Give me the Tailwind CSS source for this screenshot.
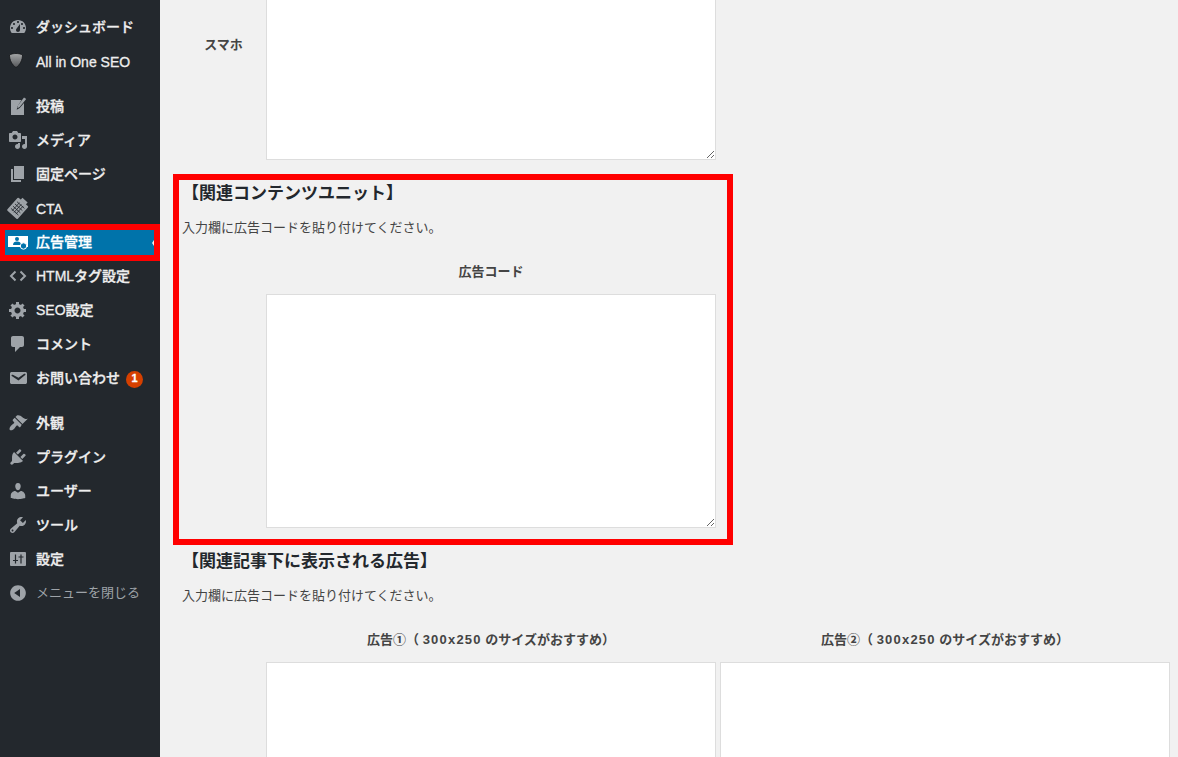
<!DOCTYPE html>
<html lang="ja">
<head>
    <meta charset="UTF-8">
    <title>広告管理</title>
    <script src="https://cdn.jsdelivr.net/npm/@tailwindcss/browser@4"></script>
</head>
<body class="h-screen overflow-hidden flex bg-[#f1f1f1] font-['Liberation_Sans','Noto_Sans_CJK_JP',sans-serif] text-[13px] text-[#444]">
    <!-- sidebar -->
    <nav class="w-40 shrink-0 h-full bg-[#23282d] pt-2.5 text-sm font-medium text-[#eee] [-webkit-text-stroke:0.3px]">
        <a class="flex items-center h-[34px]"><svg class="w-5 h-5 ml-2 mr-2 fill-[#9ea3a8]" viewBox="0 0 20 20"><path d="M3.76 16h12.48c1.1-1.37 1.76-3.11 1.76-5 0-4.42-3.58-8-8-8s-8 3.58-8 8c0 1.89.66 3.63 1.76 5zM10 4c.55 0 1 .45 1 1s-.45 1-1 1-1-.45-1-1 .45-1 1-1zM6 6c.55 0 1 .45 1 1s-.45 1-1 1-1-.45-1-1 .45-1 1-1zm8 0c.55 0 1 .45 1 1s-.45 1-1 1-1-.45-1-1 .45-1 1-1zm-5.37 5.55L12 7v6c0 1.1-.9 2-2.01 2C8.89 15 8 14.1 8 13c0-.57.24-1.08.63-1.45zM4 10c.55 0 1 .45 1 1s-.45 1-1 1-1-.45-1-1 .45-1 1-1zm12 0c.55 0 1 .45 1 1s-.45 1-1 1-1-.45-1-1 .45-1 1-1z"/></svg>ダッシュボード</a>
        <a class="flex items-center h-[34px]"><svg class="w-5 h-5 ml-2 mr-2 -mt-1" viewBox="0 0 20 20"><defs><linearGradient id="shield" x1="0" y1="0" x2="0" y2="1"><stop offset="0" stop-color="#a4a6a7"/><stop offset="1" stop-color="#55575a"/></linearGradient></defs><path fill="url(#shield)" stroke="#111416" stroke-width=".8" d="M8 4.500c2.500 0 5 .5 6.500 1.500 0 5-2.500 10-6.500 12.500C4 16 1.500 11 1.500 6 3 5 5.500 4.500 8 4.500z"/></svg><span class="translate-y-px">All in One SEO</span></a>
        <div class="h-[11px]"></div>
        <a class="flex items-center h-[34px]"><svg class="w-5 h-5 ml-2 mr-2 fill-[#9ea3a8]" viewBox="0 0 20 20"><path d="M3 4h10.500l-4 6.500-.8 3.300 3-1.800 4.300-5V19H3z"/><path d="M16 1.500l2.200 1.500-6.500 8-2.300 1.300.3-2.600z"/></svg>投稿</a>
        <a class="flex items-center h-[34px]"><svg class="w-5 h-5 ml-2 mr-2 fill-[#9ea3a8]" viewBox="0 0 20 20"><path d="M13 11V4c0-.55-.45-1-1-1h-1.670L9 1H5L3.670 3H2c-.55 0-1 .45-1 1v7c0 .55.45 1 1 1h10c.55 0 1-.45 1-1zM7 4.500c1.380 0 2.500 1.120 2.500 2.500S8.380 9.500 7 9.500 4.500 8.380 4.500 7 5.620 4.500 7 4.500zM14 6h5v10.500c0 1.380-1.120 2.500-2.500 2.500S14 17.880 14 16.500s1.120-2.500 2.500-2.500c.17 0 .34.02.5.05V9h-3V6zm-4 8.050V13h2v3.500c0 1.380-1.120 2.500-2.500 2.500S7 17.880 7 16.500 8.120 14 9.500 14c.17 0 .34.02.5.05z"/></svg>メディア</a>
        <a class="flex items-center h-[34px]"><svg class="w-5 h-5 ml-2 mr-2 fill-[#9ea3a8]" viewBox="0 0 20 20"><path d="M6 15V2h10v13H6zm-1 1h8v2H3V5h2v11z"/></svg>固定ページ</a>
        <a class="flex items-center h-[34px]"><svg class="w-5 h-5 ml-2 mr-2 overflow-visible" viewBox="0 0 20 20"><g transform="rotate(42 10 10)"><rect x="3" y="2" width="14" height="17" rx="1" fill="#9ea3a8"/><rect x="6.500" y="-.5" width="7" height="3" fill="#9ea3a8"/><path d="M5 6h10M5 9h10M5 12h10M5 15h10M7.500 5v11M10 5v11M12.500 5v11" stroke="#23282d" stroke-width=".8" fill="none"/></g></svg><span class="translate-y-px">CTA</span></a>
        <!-- current item, red frame from the annotation -->
        <a class="flex items-center h-[37px] -mt-px -mb-0.5 border-[6px] border-l-[5px] border-[#f00] bg-[#0073aa] text-white relative"><svg class="w-5 h-[18px] ml-[3px] mr-2 shrink-0" viewBox="0 0 20 18"><rect y="2" width="20" height="11" fill="#fff"/><circle cx="9" cy="5" r="2" fill="#0073aa"/><path d="M5 11c0-2.500 1.500-3.500 4-3.500s4 1 4 3.500z" fill="#0073aa"/><circle cx="15.500" cy="12" r="3.200" fill="#0073aa" stroke="#fff" stroke-width="1"/></svg><span class="-translate-y-px">広告管理</span><span class="absolute right-0 top-1/2 -translate-y-1/2 w-0 h-0 border-y-[3px] border-y-transparent border-r-[2px] border-r-[#f1f1f1]"></span></a>
        <a class="flex items-center h-[34px]"><svg class="w-5 h-5 ml-2 mr-2 fill-none stroke-[#9ea3a8] stroke-2" viewBox="0 0 20 20"><path d="M7.500 5.500L3 10l4.500 4.500M12.500 5.500L17 10l-4.500 4.500"/></svg>HTMLタグ設定</a>
        <a class="flex items-center h-[34px]"><svg class="w-5 h-5 ml-2 mr-2 fill-[#9ea3a8]" viewBox="0 0 20 20"><path d="M18 12h-2.180c-.17.7-.44 1.350-.81 1.930l1.540 1.540-2.100 2.100-1.540-1.540c-.58.36-1.230.63-1.910.79V19H8v-2.180c-.68-.16-1.330-.43-1.910-.79l-1.540 1.540-2.120-2.120 1.540-1.540c-.36-.58-.63-1.230-.79-1.910H1V9.030h2.170c.16-.7.44-1.350.8-1.940L2.430 5.550l2.100-2.100 1.540 1.540c.58-.37 1.240-.64 1.930-.81V2h3v2.180c.68.16 1.330.43 1.910.79l1.540-1.540 2.120 2.120-1.540 1.540c.36.59.64 1.240.8 1.940H18V12zm-8.500 1.500c1.660 0 3-1.340 3-3s-1.340-3-3-3-3 1.340-3 3 1.340 3 3 3z"/></svg>SEO設定</a>
        <a class="flex items-center h-[34px]"><svg class="w-5 h-5 ml-2 mr-2 fill-[#9ea3a8]" viewBox="0 0 20 20"><path d="M5 2h9c1.100 0 2 .9 2 2v7c0 1.100-.9 2-2 2h-2l-5 5v-5H5c-1.100 0-2-.9-2-2V4c0-1.100.9-2 2-2z"/></svg>コメント</a>
        <a class="flex items-center h-[34px]"><svg class="w-5 h-5 ml-2 mr-2 fill-[#9ea3a8]" viewBox="0 0 20 20"><path d="M3.870 4h13.250C18.370 4 19 4.590 19 5.790v8.420c0 1.190-.63 1.790-1.880 1.790H3.870c-1.250 0-1.880-.6-1.880-1.790V5.790c0-1.200.63-1.790 1.880-1.790zm6.620 8.600l6.740-5.530c.24-.2.430-.66.13-1.070-.29-.41-.82-.42-1.170-.17l-5.700 3.860L4.800 6.830c-.35-.25-.88-.24-1.170.17-.3.41-.11.87.13 1.070z"/></svg>お問い合わせ<span class="ml-[6px] w-[17px] h-[17px] rounded-full bg-[#d54000] text-white text-[11px] font-bold flex items-center justify-center translate-y-px">1</span></a>
        <div class="h-[11px]"></div>
        <a class="flex items-center h-[34px]"><svg class="w-5 h-5 ml-2 mr-2 fill-[#9ea3a8]" viewBox="0 0 20 20"><path d="M14.480 11.060L7.410 3.990l1.500-1.500c.5-.56 2.300-.47 3.510.32 1.210.8 1.430 1.280 2.910 2.100 1.180.64 2.450 1.260 4.450.85zm-.71.71L6.700 4.700 4.930 6.470c-.39.39-.39 1.020 0 1.410l1.060 1.060c.39.39.39 1.030 0 1.420-.6.6-1.430 1.110-2.210 1.690-.35.26-.7.53-1.010.84-1.430 1.430-1.430 3.500-.9 4.100.6.5 2.700.5 4.100-.9.31-.31.58-.66.84-1.010.58-.78 1.090-1.610 1.690-2.210.39-.39 1.030-.39 1.420 0l1.060 1.060c.39.39 1.020.39 1.410 0z"/></svg>外観</a>
        <a class="flex items-center h-[34px]"><svg class="w-5 h-5 ml-2 mr-2 fill-[#9ea3a8]" viewBox="0 0 20 20"><path d="M13.110 4.360L9.870 7.600 8 5.730l3.240-3.240c.35-.34 1.050-.2 1.560.32.52.51.66 1.210.31 1.550zm-8 1.770l.91-1.120 9.010 9.010-1.190.84c-.71.71-2.630 1.160-3.820 1.160H6.140L4.900 17.260c-.59.59-1.540.59-2.120 0-.59-.58-.59-1.530 0-2.120l1.240-1.240v-3.880c0-1.130.4-3.190 1.090-3.890zm7.260 3.970l3.240-3.240c.34-.35 1.040-.21 1.550.31.52.51.66 1.210.31 1.550l-3.240 3.250z"/></svg>プラグイン</a>
        <a class="flex items-center h-[34px]"><svg class="w-5 h-5 ml-2 mr-2 fill-[#9ea3a8]" viewBox="0 0 20 20"><path d="M10 9.250c-2.270 0-2.730-3.440-2.730-3.440C7 4.020 7.820 2 9.970 2c2.160 0 2.980 2.020 2.710 3.810 0 0-.41 3.440-2.680 3.440zm0 2.570L12.720 10c2.390 0 4.520 2.330 4.520 4.530v2.490s-3.650 1.130-7.240 1.130c-3.650 0-7.240-1.130-7.240-1.130v-2.490c0-2.250 1.940-4.480 4.470-4.480z"/></svg>ユーザー</a>
        <a class="flex items-center h-[34px]"><svg class="w-5 h-5 ml-2 mr-2 fill-[#9ea3a8]" viewBox="0 0 20 20"><path d="M16.680 9.770c-1.340 1.340-3.300 1.670-4.950.99l-5.410 6.520c-.99.99-2.590.99-3.580 0s-.99-2.590 0-3.570l6.520-5.420c-.68-1.650-.35-3.610.99-4.950 1.280-1.280 3.120-1.620 4.720-1.060l-2.890 2.890 2.820 2.820 2.860-2.870c.53 1.580.18 3.390-1.080 4.650zM3.810 16.210c.4.39 1.040.39 1.430 0 .4-.4.4-1.040 0-1.430-.39-.4-1.030-.4-1.430 0-.39.39-.39 1.030 0 1.430z"/></svg>ツール</a>
        <a class="flex items-center h-[34px]"><svg class="w-5 h-5 ml-2 mr-2" viewBox="0 0 20 20"><rect x="2" y="3" width="16" height="14" rx="1" fill="#9ea3a8"/><path d="M7.500 5.500v9M5 11.500h5M13 5.500v9M10.500 8h5" stroke="#23282d" stroke-width="1.200" fill="none"/></svg>設定</a>
        <a class="flex items-center h-[34px] text-[13px] font-normal text-[#9ea3a8] [-webkit-text-stroke:0px]"><svg class="w-5 h-5 ml-2 mr-2 fill-[#9ea3a8]" viewBox="0 0 20 20"><path d="M10 2.160c4.330 0 7.840 3.510 7.840 7.840s-3.510 7.840-7.840 7.840S2.160 14.330 2.160 10 5.710 2.160 10 2.160zm2 11.720V6.120L6.180 9.970z"/></svg>メニューを閉じる</a>
    </nav>

    <!-- settings form -->
    <main class="flex-1 min-w-0 pl-[13px] -mt-[74px]">
        <div class="flex items-center pl-[9px]">
            <div class="w-[84px] pr-px text-center font-bold translate-y-[2px]">スマホ</div>
            <textarea class="w-[450px] h-[234px] bg-white border border-[#ddd] block"></textarea>
        </div>

        <section class="w-[560px] h-[371px] mt-[14px] border-[6px] border-[#f00] pl-[3px] pt-[2px]">
            <h3 class="text-[17px] leading-[24px] font-bold text-[#23282d]">【関連コンテンツユニット】</h3>
            <p class="mt-[12px] leading-[20px]">入力欄に広告コードを貼り付けてください。</p>
            <div class="ml-[84px] w-[450px] mt-[24px]">
                <div class="h-[20px] leading-[20px] text-center font-bold">広告コード</div>
                <textarea class="mt-[12px] w-[450px] h-[234px] bg-white border border-[#ddd] block"></textarea>
            </div>
        </section>

        <section class="pl-[9px] mt-[5px]">
            <h3 class="text-[17px] leading-[24px] font-bold text-[#23282d]">【関連記事下に表示される広告】</h3>
            <p class="mt-[12px] leading-[20px]">入力欄に広告コードを貼り付けてください。</p>
            <div class="ml-[84px] mt-[24px] flex gap-1">
                <div class="w-[450px] shrink-0">
                    <div class="h-[20px] leading-[20px] text-center font-bold">広告①（ <span class="tracking-[1.200px]">300x250</span> のサイズがおすすめ）</div>
                    <textarea class="mt-[12px] w-[450px] h-[234px] bg-white border border-[#ddd] block"></textarea>
                </div>
                <div class="w-[450px] shrink-0">
                    <div class="h-[20px] leading-[20px] text-center font-bold">広告②（ <span class="tracking-[1.200px]">300x250</span> のサイズがおすすめ）</div>
                    <textarea class="mt-[12px] w-[450px] h-[234px] bg-white border border-[#ddd] block"></textarea>
                </div>
            </div>
        </section>
    </main>
</body>
</html>
